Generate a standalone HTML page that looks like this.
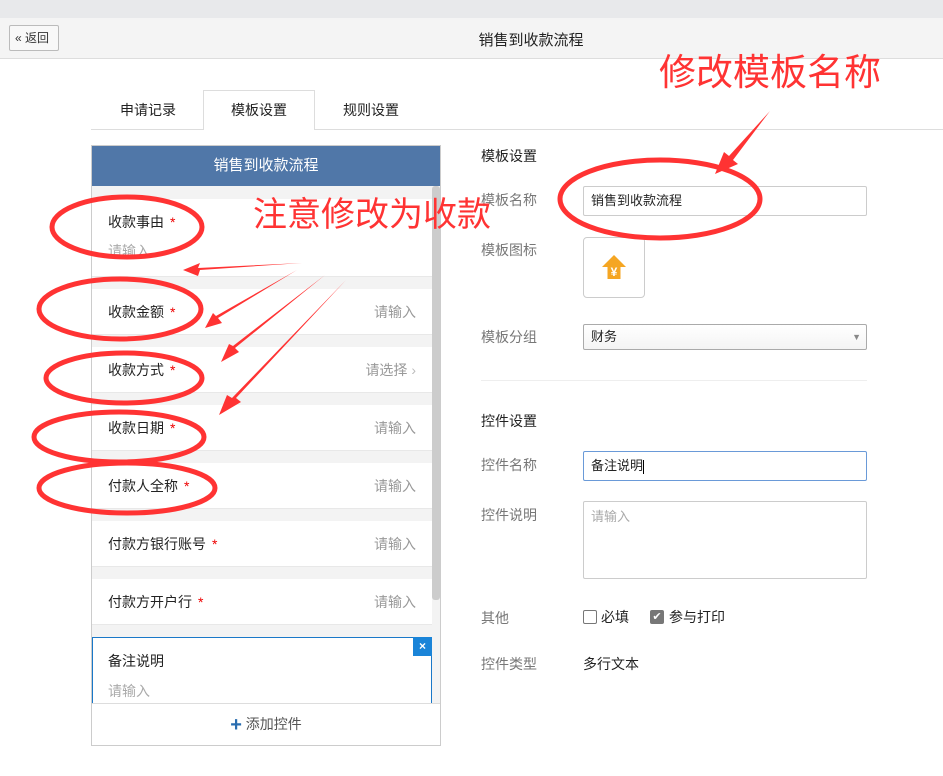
<!DOCTYPE html>
<html><head><meta charset="utf-8"><style>
*{margin:0;padding:0;box-sizing:border-box}
body{width:943px;height:776px;position:relative;background:#fff;font-family:"Liberation Sans","Noto Sans CJK SC",sans-serif;font-size:14px;color:#222;overflow:hidden}
.a{position:absolute}
.lbl{position:absolute;left:481px;color:#777;font-size:14px}
.item{position:absolute;left:92px;width:340px;background:#fff;border-bottom:1px solid #e8e8e8}
.item .t{position:absolute;left:16px;font-size:14px;color:#222}
.item .t i{color:#e00;font-style:normal;margin-left:6px}
.item .p{position:absolute;right:16px;color:#999}
.inp{position:absolute;left:583px;width:284px;border:1px solid #ccc;border-radius:2px;background:#fff;padding-left:7px;font-size:13px}
</style></head><body>
<div class="a" style="left:0;top:0;width:943px;height:18px;background:#e8e9eb"></div>
<div class="a" style="left:0;top:18px;width:943px;height:41px;background:#f4f4f4;border-bottom:1px solid #ddd"></div>
<div class="a" style="left:9px;top:25px;width:50px;height:26px;border:1px solid #bbb;border-radius:2px;background:#f8f8f8;font-size:12px;line-height:24px;padding-left:5px;color:#333">« 返回</div>
<div class="a" style="left:0;width:1062px;top:29px;text-align:center;font-size:15px;color:#222">销售到收款流程</div>

<div class="a" style="left:91px;top:129px;width:852px;height:1px;background:#ddd"></div>
<div class="a" style="left:203px;top:90px;width:112px;height:40px;border:1px solid #ddd;border-bottom:none;background:#fff"></div>
<div class="a" style="left:120px;top:100px">申请记录</div>
<div class="a" style="left:231px;top:100px">模板设置</div>
<div class="a" style="left:343px;top:100px">规则设置</div>

<div class="a" style="left:91px;top:145px;width:350px;height:601px;border:1px solid #ccc;background:#f3f3f3"></div>
<div class="a" style="left:92px;top:146px;width:348px;height:40px;background:#5077a8;color:#fff;font-size:15px;text-align:center;line-height:40px">销售到收款流程</div>
<div class="a" style="left:432px;top:186px;width:8px;height:414px;background:#ccc;border-radius:3px"></div>
<div class="item" style="top:199px;height:78px"><span class="t" style="top:13px">收款事由<i>*</i></span><span class="a" style="left:16px;top:42px;color:#aaa">请输入</span></div>
<div class="item" style="top:289px;height:46px"><span class="t" style="top:13px">收款金额<i>*</i></span><span class="p" style="top:13px">请输入</span></div>
<div class="item" style="top:347px;height:46px"><span class="t" style="top:13px">收款方式<i>*</i></span><span class="p" style="top:13px">请选择 <span style="color:#bbb">›</span></span></div>
<div class="item" style="top:405px;height:46px"><span class="t" style="top:13px">收款日期<i>*</i></span><span class="p" style="top:13px">请输入</span></div>
<div class="item" style="top:463px;height:46px"><span class="t" style="top:13px">付款人全称<i>*</i></span><span class="p" style="top:13px">请输入</span></div>
<div class="item" style="top:521px;height:46px"><span class="t" style="top:13px">付款方银行账号<i>*</i></span><span class="p" style="top:13px">请输入</span></div>
<div class="item" style="top:579px;height:46px"><span class="t" style="top:13px">付款方开户行<i>*</i></span><span class="p" style="top:13px">请输入</span></div>
<div class="a" style="left:92px;top:637px;width:340px;height:70px;background:#fff;border:1px solid #1a78c8"></div>
<div class="a" style="left:413px;top:637px;width:19px;height:19px;background:#1a84d8;color:#fff;font-size:12px;text-align:center;line-height:19px;font-weight:bold">×</div>
<div class="a" style="left:108px;top:651px">备注说明</div>
<div class="a" style="left:108px;top:681px;color:#aaa">请输入</div>
<div class="a" style="left:92px;top:703px;width:348px;height:42px;background:#fff;border-top:1px solid #ddd;text-align:center;line-height:40px;color:#555"><span style="color:#2a6db0;font-size:20px;font-weight:bold;vertical-align:-2px">+</span> 添加控件</div>

<div class="a" style="left:481px;top:146px;color:#222">模板设置</div>
<div class="lbl" style="top:190px">模板名称</div>
<div class="inp" style="top:186px;height:30px;line-height:28px">销售到收款流程</div>
<div class="lbl" style="top:240px">模板图标</div>
<div class="a" style="left:583px;top:237px;width:62px;height:61px;border:1px solid #ccc;border-radius:4px"></div>
<svg class="a" style="left:601px;top:254px" width="26" height="26" viewBox="0 0 26 26"><path d="M13 1 L25 13 L19.5 13 L19.5 25 L6.5 25 L6.5 13 L1 13 Z" fill="#f5a623"/><text x="13" y="22" fill="#fff" font-size="12" font-weight="bold" text-anchor="middle" font-family="Liberation Sans">¥</text></svg>
<div class="lbl" style="top:327px">模板分组</div>
<div class="inp" style="top:324px;height:26px;line-height:24px;background:linear-gradient(#fff,#f4f4f4);border-color:#aaa">财务<span style="position:absolute;right:5px;color:#888;font-size:9px">▼</span></div>
<div class="a" style="left:481px;top:380px;width:386px;height:1px;background:#eee"></div>
<div class="a" style="left:481px;top:411px;color:#222">控件设置</div>
<div class="lbl" style="top:455px">控件名称</div>
<div class="inp" style="top:451px;height:30px;line-height:28px;border-color:#6a9ad8">备注说明<span style="border-left:1px solid #000;height:14px;display:inline-block;vertical-align:middle"></span></div>
<div class="lbl" style="top:505px">控件说明</div>
<div class="inp" style="top:501px;height:78px;padding-top:4px;color:#aaa">请输入</div>
<div class="lbl" style="top:608px">其他</div>
<div class="a" style="left:583px;top:610px;width:14px;height:14px;border:1px solid #777;border-radius:2px"></div>
<div class="a" style="left:601px;top:607px">必填</div>
<div class="a" style="left:650px;top:610px;width:14px;height:14px;background:#777;border-radius:2px;color:#fff;font-size:11px;text-align:center;line-height:14px">✔</div>
<div class="a" style="left:669px;top:607px">参与打印</div>
<div class="lbl" style="top:654px">控件类型</div>
<div class="a" style="left:583px;top:654px">多行文本</div>

<div class="a" style="left:659px;top:50px;color:#f33;font-size:37px;line-height:46px">修改模板名称</div>
<div class="a" style="left:253px;top:193px;color:#f33;font-size:34px;line-height:44px">注意修改为收款</div>
<svg class="a" style="left:0;top:0" width="943" height="776">
<g fill="none" stroke="#f33" stroke-width="5">
<ellipse cx="127" cy="227" rx="75" ry="30"/>
<ellipse cx="120" cy="309" rx="81" ry="30"/>
<ellipse cx="124" cy="378" rx="78" ry="25"/>
<ellipse cx="119" cy="437" rx="85" ry="25"/>
<ellipse cx="127" cy="488" rx="88" ry="25"/>
<ellipse cx="660" cy="199" rx="100" ry="39"/>
</g>
<g fill="#f33">
<polygon points="302,263 200,270 198,276 183,270 200,263 198,268"/>
<polygon points="297,270 218,318 222,323 205,328 213,313 216,316"/>
<polygon points="325,275 235,348 239,352 221,362 229,344 233,346"/>
<polygon points="346,280 236,398 241,402 219,415 227,395 232,398"/>
<polygon points="770,111 733,160 738,164 715,174 724,152 729,156"/>
</g>
</svg>
</body></html>
